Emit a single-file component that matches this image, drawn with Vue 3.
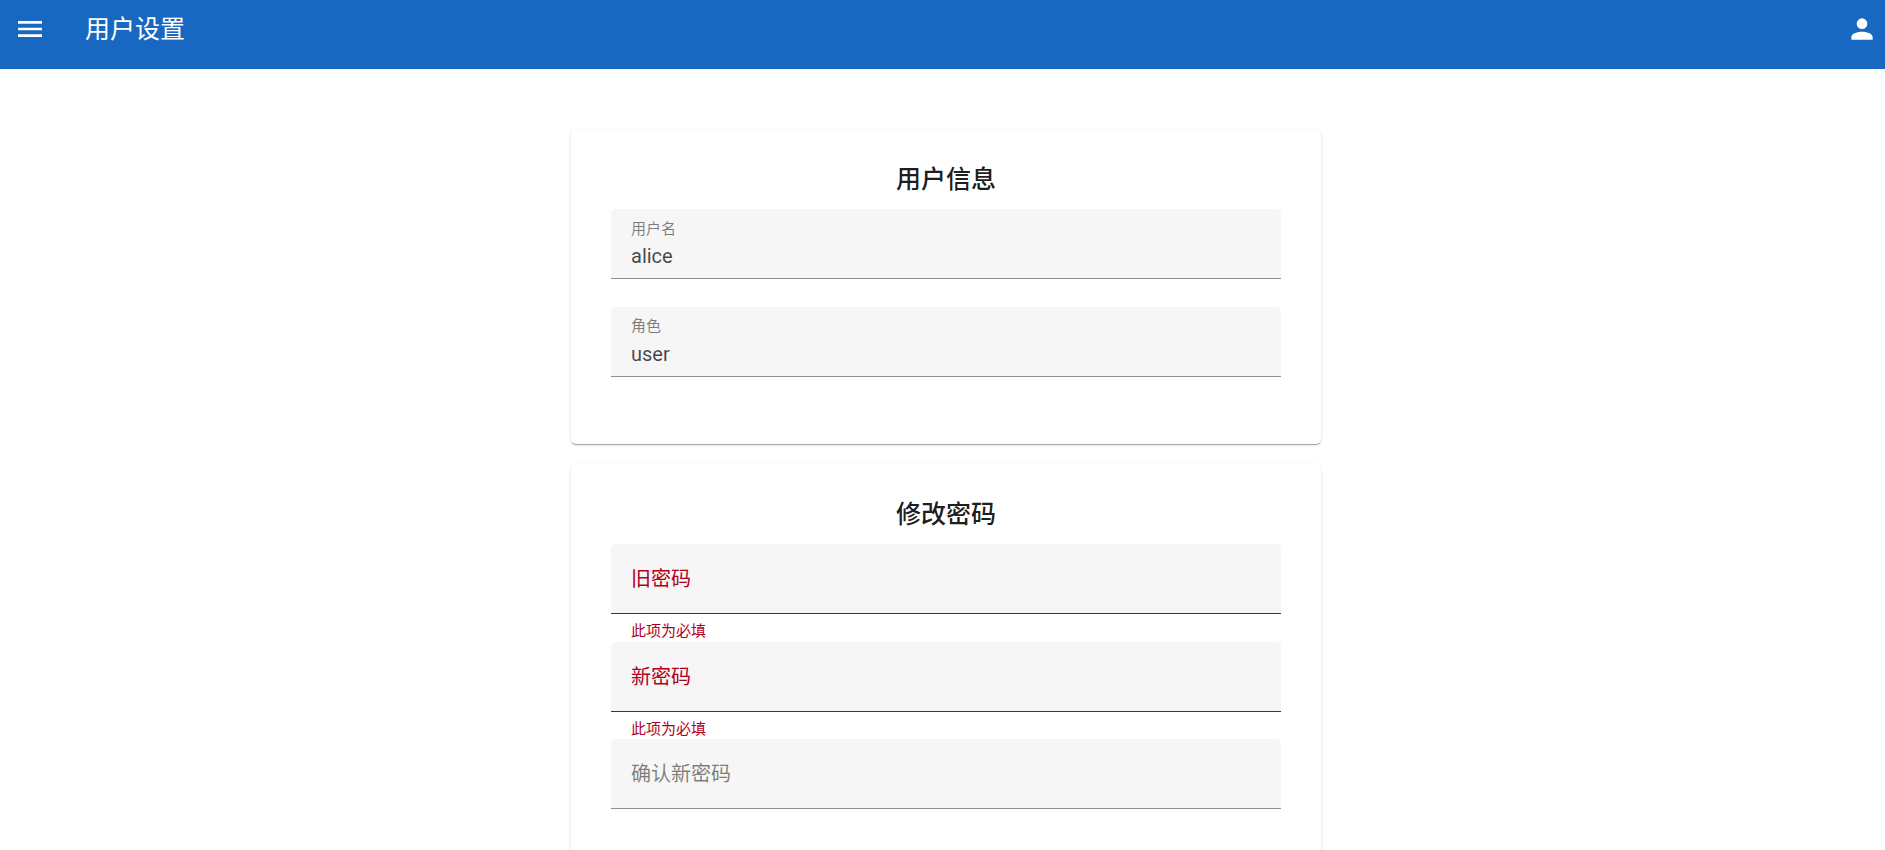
<script setup>
const info = [
  { label: '用户名', value: 'alice' },
  { label: '角色', value: 'user' },
]
const pwd = [
  { label: '旧密码', error: '此项为必填' },
  { label: '新密码', error: '此项为必填' },
  { label: '确认新密码', error: '' },
]
</script>

<template>
  <div class="page">
    <header class="bar">
      <button class="icon-btn menu" aria-label="菜单">
        <svg viewBox="0 0 24 24" class="icon"><path d="M3,6H21V8H3V6M3,11H21V13H3V11M3,16H21V18H3V16Z" /></svg>
      </button>
      <div class="bar-title">用户设置</div>
      <button class="icon-btn user" aria-label="用户">
        <svg viewBox="0 0 24 24" class="icon"><path d="M12,4A4,4 0 0,1 16,8A4,4 0 0,1 12,12A4,4 0 0,1 8,8A4,4 0 0,1 12,4M12,14C16.42,14 20,15.79 20,18V20H4V18C4,15.79 7.58,14 12,14Z" /></svg>
      </button>
    </header>

    <main class="main">
      <section class="card">
        <h2 class="card-title">用户信息</h2>
        <div v-for="f in info" :key="f.label" class="field">
          <div class="control filled">
            <span class="small-label">{{ f.label }}</span>
            <span class="value">{{ f.value }}</span>
          </div>
          <div class="details"></div>
        </div>
      </section>

      <section class="card">
        <h2 class="card-title">修改密码</h2>
        <div v-for="f in pwd" :key="f.label" class="field" :class="{ invalid: f.error }">
          <div class="control">
            <span class="big-label">{{ f.label }}</span>
          </div>
          <div class="details">{{ f.error }}</div>
        </div>
      </section>
    </main>
  </div>
</template>

<style>
html, body { overflow: hidden; height: 100%; background: #fff; }
</style>

<style scoped>
.page {
  height: 850px;
  overflow: hidden;
  font-family: Roboto, "Noto Sans CJK SC", sans-serif;
  color: rgba(0, 0, 0, 0.87);
}
.bar {
  height: 69px;
  background: #1867c0;
  display: flex;
  align-items: flex-start;
  color: #fff;
}
.icon-btn {
  border: 0;
  padding: 0;
  background: none;
  width: 32px;
  height: 32px;
  margin-top: 13px;
  color: inherit;
}
.menu { margin-left: 14px; }
.user { margin-left: auto; margin-right: 7.5px; }
.icon { width: 32px; height: 32px; display: block; fill: currentColor; }
.bar-title {
  margin-left: 39px;
  font-size: 25px;
  line-height: 60px;
}
.main {
  display: flex;
  flex-direction: column;
  align-items: center;
  gap: 20px;
  padding: 60px 0 0 7px;
}
.card {
  width: 750px;
  box-sizing: border-box;
  flex: none;
  padding: 30px 40px 39.8px;
  background: #fff;
  border-radius: 5px;
  box-shadow: 0 2px 1px -1px rgba(0, 0, 0, 0.2), 0 1px 1px 0 rgba(0, 0, 0, 0.14), 0 1px 3px 0 rgba(0, 0, 0, 0.12);
}
.card-title {
  margin: 0 0 9px;
  padding-top: 1px;
  font-size: 25px;
  font-weight: 500;
  line-height: 40px;
  text-align: center;
  color: rgba(0, 0, 0, 0.9);
}
.control {
  height: 70px;
  box-sizing: border-box;
  padding: 0 20px;
  background: #f6f6f6;
  border-radius: 5px 5px 0 0;
  border-bottom: 1px solid rgba(0, 0, 0, 0.42);
  display: flex;
  flex-direction: column;
  justify-content: center;
}
.filled { justify-content: flex-start; }
.small-label {
  font-size: 15px;
  line-height: 20px;
  margin-top: 9.6px;
  color: rgba(0, 0, 0, 0.5);
}
.value {
  font-size: 20px;
  line-height: 28px;
  margin-top: 3.4px;
  color: rgba(0, 0, 0, 0.72);
}
.big-label {
  font-size: 20px;
  line-height: 28px;
  color: rgba(0, 0, 0, 0.5);
}
.details {
  height: 27.6px;
  padding: 7px 20px 0;
  box-sizing: border-box;
  font-size: 15px;
  line-height: 20px;
}
.invalid .control { border-bottom-color: #b00020; }
.invalid .big-label { margin-top: 2px; color: #b00020; }
.invalid .details { color: #b00020; }
</style>
